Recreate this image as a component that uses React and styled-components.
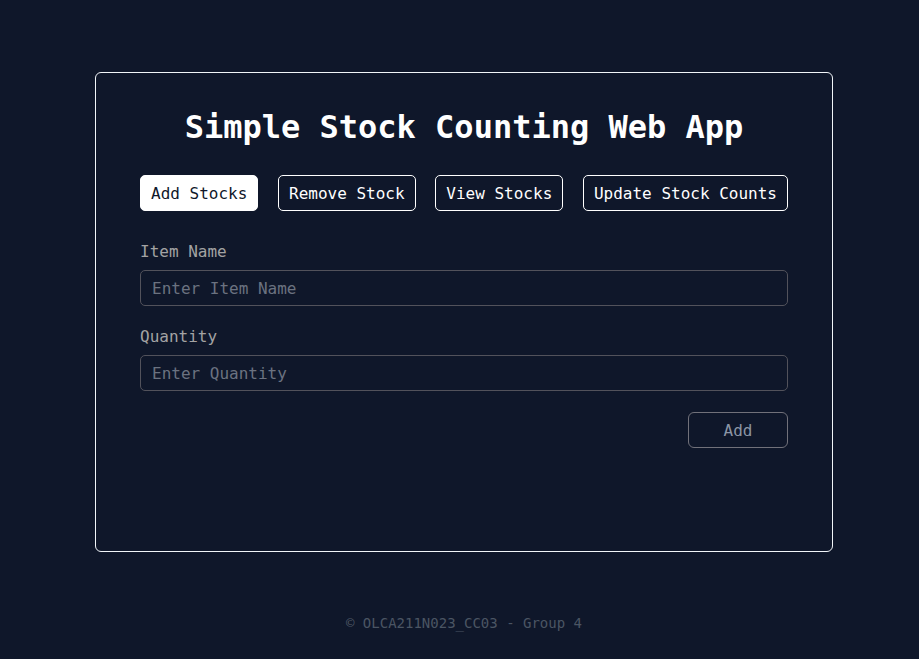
import React, { useState } from 'react';
import styled, { createGlobalStyle } from 'styled-components';

const GlobalStyle = createGlobalStyle`
  * { box-sizing: border-box; }
  html, body {
    margin: 0;
    padding: 0;
    background: #0f172a;
    font-family: "DejaVu Sans Mono", "Liberation Mono", monospace;
  }
`;

const Page = styled.div`
  min-height: 100vh;
  display: flex;
  flex-direction: column;
  align-items: center;
  padding: 72px 0 0 9px;
`;

const Card = styled.main`
  width: 738px;
  height: 480px;
  border: 1px solid #f1f5f9;
  border-radius: 6px;
  padding: 34px 44px 0;
  display: flex;
  flex-direction: column;
`;

const Title = styled.h1`
  margin: 0;
  font-size: 32px;
  line-height: 40px;
  font-weight: 700;
  color: #ffffff;
  text-align: center;
`;

const Tabs = styled.nav`
  margin-top: 28px;
  display: flex;
  justify-content: space-between;
`;

const Tab = styled.button`
  height: 36px;
  padding: 0 10px;
  border: 1px solid #ffffff;
  border-radius: 5px;
  font-family: inherit;
  font-size: 16px;
  font-weight: 500;
  background: ${({ $active }) => ($active ? '#ffffff' : 'transparent')};
  color: ${({ $active }) => ($active ? '#0f172a' : '#ffffff')};
  cursor: pointer;
`;

const Form = styled.form`
  margin-top: 29px;
  display: flex;
  flex-direction: column;
`;

const Field = styled.div`
  display: flex;
  flex-direction: column;
  gap: 6px;
  margin-bottom: ${({ $last }) => ($last ? '21px' : '19px')};
`;

const Label = styled.label`
  font-size: 16px;
  line-height: 24px;
  color: #a3a3a3;
`;

const Input = styled.input`
  height: 36px;
  padding: 0 11px;
  border: 1px solid #52525b;
  border-radius: 5px;
  background: transparent;
  color: #e4e4e7;
  font-family: inherit;
  font-size: 16px;
  outline: none;

  &::placeholder {
    color: #6b7280;
  }
`;

const Actions = styled.div`
  display: flex;
  justify-content: flex-end;
`;

const SubmitButton = styled.button`
  width: 100px;
  height: 36px;
  border: 1px solid #71717a;
  border-radius: 6px;
  background: transparent;
  color: #8b95a5;
  font-family: inherit;
  font-size: 16px;
  cursor: pointer;
`;

const Footer = styled.footer`
  margin-top: 61px;
  font-size: 14px;
  line-height: 20px;
  color: #4b5563;
`;

const tabs = ['Add Stocks', 'Remove Stock', 'View Stocks', 'Update Stock Counts'];

const App = () => {
  const [active, setActive] = useState(0);

  return (
    <>
      <GlobalStyle />
      <Page>
        <Card>
          <Title>Simple Stock Counting Web App</Title>
          <Tabs>
            {tabs.map((t, i) => (
              <Tab key={t} $active={i === active} onClick={() => setActive(i)}>
                {t}
              </Tab>
            ))}
          </Tabs>
          <Form onSubmit={(e) => e.preventDefault()}>
            <Field>
              <Label htmlFor="item">Item Name</Label>
              <Input id="item" placeholder="Enter Item Name" />
            </Field>
            <Field $last>
              <Label htmlFor="qty">Quantity</Label>
              <Input id="qty" placeholder="Enter Quantity" />
            </Field>
            <Actions>
              <SubmitButton type="submit">Add</SubmitButton>
            </Actions>
          </Form>
        </Card>
        <Footer>© OLCA211N023_CC03 - Group 4</Footer>
      </Page>
    </>
  );
};

export default App;
